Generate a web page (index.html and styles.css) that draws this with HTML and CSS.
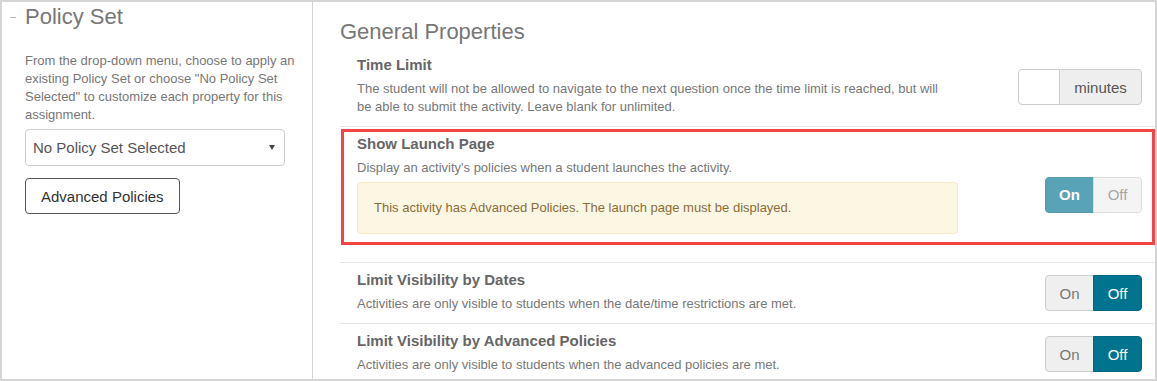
FILE: index.html
```html
<!DOCTYPE html>
<html lang="en">
<head>
    <meta charset="UTF-8">
    <meta name="viewport" content="width=device-width, initial-scale=1.0">
    <title>Assignment Policies</title>
    <link rel="stylesheet" href="styles.css">
</head>
<body>

<div class="frame">
    <aside class="policy-panel">
        <h2 class="panel-title"><span class="collapse-icon"></span>Policy Set</h2>
        <p class="panel-help">From the drop-down menu, choose to apply an existing Policy Set or choose "No Policy Set Selected" to customize each property for this assignment.</p>
        <div class="select-box">
            <span>No Policy Set Selected</span>
            <span class="caret"></span>
        </div>
        <button class="btn-outline">Advanced Policies</button>
    </aside>

    <main class="props-panel">
        <h2 class="section-title">General Properties</h2>

        <div class="prop-row">
            <div class="prop-text">
                <div class="prop-name">Time Limit</div>
                <div class="prop-desc">The student will not be allowed to navigate to the next question once the time limit is reached, but will be able to submit the activity. Leave blank for unlimited.</div>
            </div>
            <div class="prop-control input-group">
                <span class="input-field"></span>
                <span class="input-addon">minutes</span>
            </div>
        </div>

        <div class="prop-row highlighted">
            <div class="prop-text">
                <div class="prop-name">Show Launch Page</div>
                <div class="prop-desc">Display an activity's policies when a student launches the activity.</div>
                <div class="notice">This activity has Advanced Policies. The launch page must be displayed.</div>
            </div>
            <div class="prop-control toggle disabled">
                <button class="toggle-btn active">On</button>
                <button class="toggle-btn">Off</button>
            </div>
            <div class="annotation"></div>
        </div>

        <div class="prop-row">
            <div class="prop-text">
                <div class="prop-name">Limit Visibility by Dates</div>
                <div class="prop-desc">Activities are only visible to students when the date/time restrictions are met.</div>
            </div>
            <div class="prop-control toggle">
                <button class="toggle-btn">On</button>
                <button class="toggle-btn active">Off</button>
            </div>
        </div>

        <div class="prop-row">
            <div class="prop-text">
                <div class="prop-name">Limit Visibility by Advanced Policies</div>
                <div class="prop-desc">Activities are only visible to students when the advanced policies are met.</div>
            </div>
            <div class="prop-control toggle">
                <button class="toggle-btn">On</button>
                <button class="toggle-btn active">Off</button>
            </div>
        </div>
    </main>
</div>

</body>
</html>
```

FILE: styles.css
```css
body {
    margin: 0;
    font-family: "Liberation Sans", Arial, sans-serif;
    background: #fff;
    color: #777;
}
.frame {
    width: 1157px;
    height: 381px;
    box-sizing: border-box;
    border: 2px solid #d5d5d5;
    display: flex;
    overflow: hidden;
    background: #fff;
}

/* left column */
.policy-panel {
    width: 311px;
    flex: none;
    box-sizing: border-box;
    border-right: 1px solid #d3d3d3;
    padding: 3px 12px 0 23px;
}
.panel-title {
    display: flex;
    margin: 0;
    font-size: 22px;
    font-weight: normal;
    line-height: 24px;
    color: #777;
}
.collapse-icon {
    width: 6px;
    height: 1px;
    margin: 12px 9px 0 -15px;
    background: #b5b5b5;
}
.panel-help {
    margin: 23px 0 0;
    font-size: 13px;
    line-height: 18px;
    color: #777;
}
.select-box {
    width: 260px;
    height: 37px;
    box-sizing: border-box;
    margin-top: 5px;
    padding: 0 9px 0 7px;
    border: 1px solid #ccc;
    border-radius: 4px;
    display: flex;
    align-items: center;
    justify-content: space-between;
    font-size: 15px;
    color: #555;
}
.caret {
    width: 0;
    height: 0;
    border-left: 3px solid transparent;
    border-right: 3px solid transparent;
    border-top: 5px solid #444;
}
.btn-outline {
    display: block;
    height: 36px;
    margin-top: 12px;
    padding: 0 15px;
    border: 1px solid #555;
    border-radius: 4px;
    background: #fff;
    font-family: inherit;
    font-size: 15px;
    color: #333;
}

/* right column */
.props-panel {
    flex: 1;
    padding: 18px 0 0 27px;
}
.section-title {
    margin: 0 0 4px;
    font-size: 22px;
    font-weight: normal;
    line-height: 24px;
    color: #777;
}
.prop-row {
    position: relative;
    display: flex;
    align-items: center;
    padding: 7px 13px 10px 17px;
}
.prop-row + .prop-row {
    border-top: 1px solid #e6e6e6;
}
.prop-text {
    width: 601px;
}
.prop-name {
    font-size: 15px;
    font-weight: bold;
    line-height: 20px;
    color: #666;
}
.prop-desc {
    max-width: 594px;
    margin-top: 5px;
    font-size: 13px;
    line-height: 18px;
    color: #777;
}
.notice {
    margin: 5px 0 18px;
    padding: 16px;
    border: 1px solid #f8e9c6;
    border-radius: 4px;
    background: #fcf7e2;
    color: #8a6d3b;
    font-size: 13px;
    line-height: 18px;
}
.prop-control {
    margin-left: auto;
    margin-top: 3px;
}

.input-group {
    display: flex;
    height: 36px;
}
.input-field {
    width: 42px;
    box-sizing: border-box;
    border: 1px solid #ccc;
    border-radius: 4px 0 0 4px;
    background: #fff;
}
.input-addon {
    width: 83px;
    box-sizing: border-box;
    margin-left: -1px;
    border: 1px solid #ccc;
    border-radius: 0 4px 4px 0;
    background: #eee;
    display: flex;
    align-items: center;
    justify-content: center;
    font-size: 15px;
    color: #555;
}

.toggle {
    display: flex;
    height: 36px;
}
.toggle.disabled {
    opacity: .65;
}
.toggle-btn {
    width: 49px;
    height: 36px;
    box-sizing: border-box;
    border: 1px solid #ccc;
    background: #efefef;
    font-family: inherit;
    font-size: 15px;
    color: #777;
    padding: 0;
}
.toggle-btn:first-child {
    border-radius: 4px 0 0 4px;
}
.toggle-btn + .toggle-btn {
    margin-left: -1px;
    border-radius: 0 4px 4px 0;
}
.toggle-btn.active {
    background: #00738f;
    border-color: #006781;
    color: #fff;
}
.toggle.disabled .toggle-btn.active {
    font-weight: bold;
}

/* red callout drawn over the highlighted row */
.annotation {
    position: absolute;
    top: 2px;
    left: 1px;
    width: 814px;
    height: 116px;
    box-sizing: border-box;
    border: 3px solid #f24444;
    pointer-events: none;
}
```
